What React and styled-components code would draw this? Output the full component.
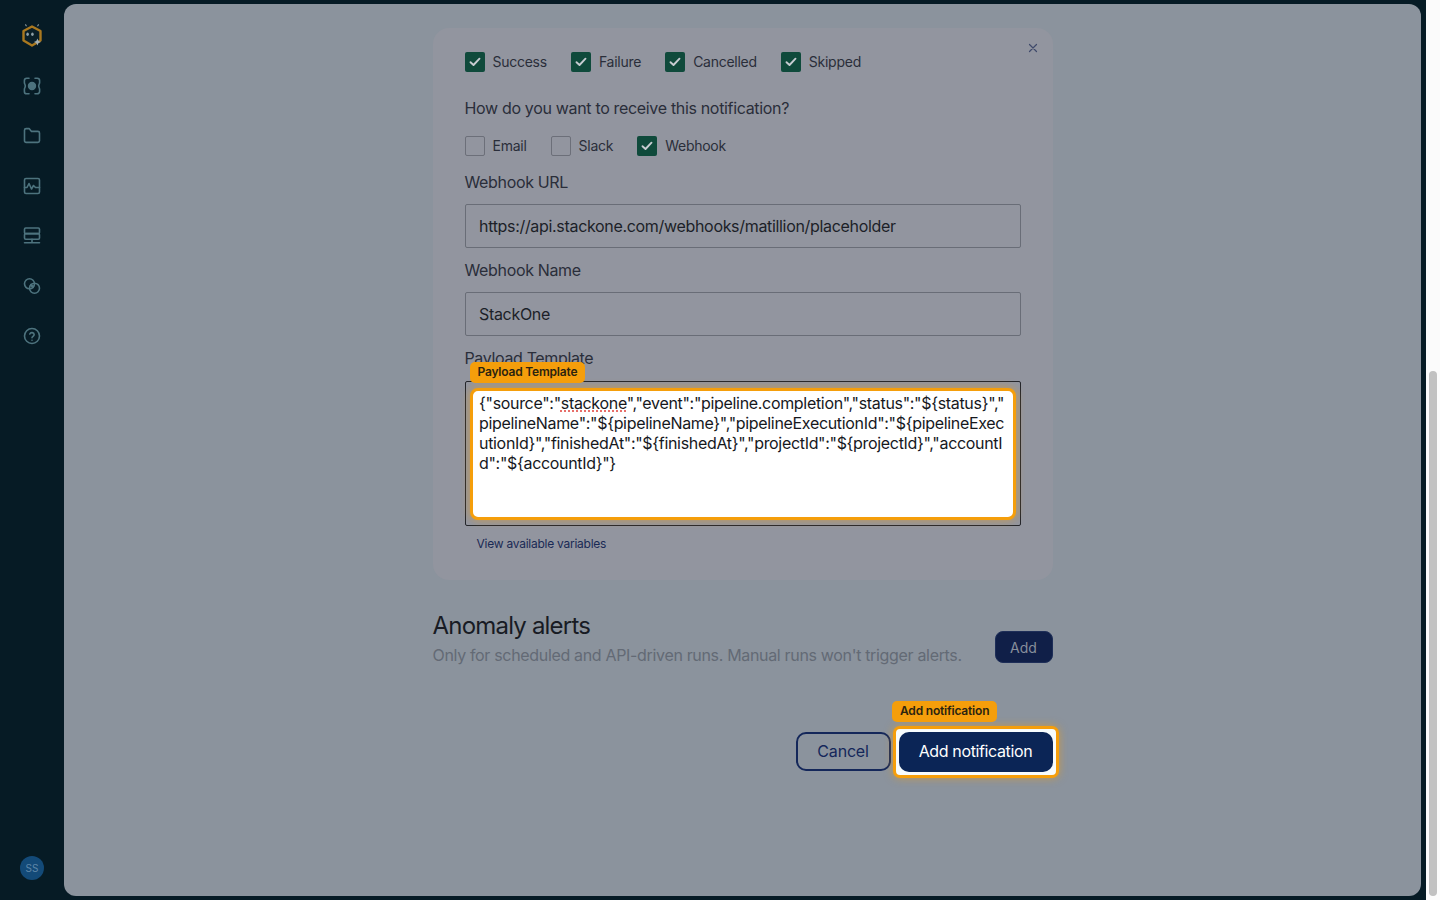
import React from 'react';
import styled, { createGlobalStyle } from 'styled-components';

const GlobalStyle = createGlobalStyle`
  html, body {
    margin: 0;
    height: 100%;
    overflow: hidden;
    background: #061b25;
    font-family: Inter, "Liberation Sans", sans-serif;
  }
`;

const Page = styled.div`
  display: flex;
  height: 900px;
  background: #061b25;
`;

const Sidebar = styled.nav`
  display: flex;
  flex-direction: column;
  align-items: center;
  width: 64px;
  flex: none;
  padding: 11px 0 20px;
  box-sizing: border-box;
`;

const NavIcon = styled.div`
  display: flex;
  align-items: center;
  justify-content: center;
  width: 64px;
  height: 50px;
  color: #4d737e;
`;

const Avatar = styled.div`
  display: flex;
  align-items: center;
  justify-content: center;
  width: 24px;
  height: 24px;
  margin-top: auto;
  border-radius: 50%;
  background: #134a78;
  color: #5f87a8;
  font-size: 10px;
`;

const Main = styled.main`
  flex: 1;
  margin: 4px 5px 4px 0;
  padding-top: 24px;
  border-radius: 12px;
  background: #8b939d;
  overflow: hidden;
`;

const Column = styled.div`
  width: 620px;
  margin: 0 auto;
`;

const Card = styled.section`
  position: relative;
  height: 552px;
  box-sizing: border-box;
  padding: 24px 32px 0;
  border-radius: 16px;
  background: #92959f;
`;

const CloseButton = styled.div`
  position: absolute;
  top: 15px;
  right: 15px;
  display: flex;
  color: #3f4a6b;
`;

const CheckRow = styled.div`
  display: flex;
  gap: 24px;
  margin-top: ${props => props.$top || 0}px;
`;

const CheckItem = styled.label`
  display: flex;
  align-items: center;
  gap: 8px;
  height: 20px;
  font-size: 14px;
  letter-spacing: -0.26px;
  color: #2a2e3a;
`;

const CheckText = styled.span`
  margin-bottom: 2px;
`;

const Box = styled.span`
  display: flex;
  align-items: center;
  justify-content: center;
  width: 20px;
  height: 20px;
  box-sizing: border-box;
  border-radius: 2px;
  background: ${props => (props.$on ? '#0f4a3b' : 'transparent')};
  border: ${props => (props.$on ? 'none' : '1px solid #6c6f79')};
  color: #c6cbd0;
`;

const Question = styled.div`
  margin-top: 24px;
  font-size: 16px;
  line-height: 24px;
  letter-spacing: -0.33px;
  color: #2a2e3a;
`;

const FieldLabel = styled.div`
  margin-top: ${props => props.$top}px;
  margin-bottom: ${props => props.$bottom}px;
  font-size: 16px;
  line-height: 24px;
  letter-spacing: -0.35px;
  color: #2a2e3a;
`;

const Input = styled.div`
  display: flex;
  align-items: center;
  height: 44px;
  box-sizing: border-box;
  padding: 0 13.5px;
  border: 1px solid #696d77;
  border-radius: 2px;
  font-size: 16px;
  letter-spacing: -0.32px;
  color: #1c1f28;
`;

const TextareaFrame = styled.div`
  position: relative;
  height: 145px;
  box-sizing: border-box;
  padding: 6px 4px 5px;
  border: 1px solid #24262c;
  border-radius: 2px;
`;

const Highlight = styled.div`
  height: 100%;
  box-sizing: border-box;
  padding: 2px 5px 2px 6.5px;
  border: 3px solid #f59e0b;
  border-radius: 8px;
  background: #fff;
  box-shadow: 0 0 8px rgba(245, 158, 11, 0.55);
  font-size: 16px;
  line-height: 20px;
  letter-spacing: -0.32px;
  color: #16181d;
  overflow-wrap: anywhere;
`;

const Misspelled = styled.span`
  text-decoration: underline dotted #e0403a;
  text-underline-offset: 2px;
`;

const Tag = styled.span`
  position: absolute;
  left: ${props => props.$left}px;
  top: ${props => props.$top}px;
  padding: 0 8px;
  height: 21px;
  line-height: 20px;
  border-radius: 5px;
  background: #f59e0b;
  font-size: 12px;
  font-weight: 600;
  letter-spacing: -0.2px;
  color: #2b2410;
  white-space: nowrap;
`;

const VariablesLink = styled.a`
  display: block;
  margin: 10px 0 0 12px;
  font-size: 12px;
  line-height: 16px;
  letter-spacing: -0.25px;
  color: #1a2a55;
`;

const AlertRow = styled.div`
  display: flex;
  justify-content: space-between;
  align-items: flex-end;
  margin-top: 30px;
`;

const AlertTitle = styled.h2`
  margin: 0;
  font-size: 24px;
  font-weight: 400;
  line-height: 32px;
  letter-spacing: -0.8px;
  color: #181b24;
`;

const AlertText = styled.p`
  margin: 1px 0 0;
  font-size: 16px;
  line-height: 24px;
  letter-spacing: -0.33px;
  color: #636a75;
`;

const AddButton = styled.button`
  width: 58px;
  height: 32px;
  margin-bottom: 4px;
  border: 1px solid #1e2e58;
  border-radius: 8px;
  background: #101f48;
  font: 400 14px Inter, sans-serif;
  color: #878e9b;
`;

const Actions = styled.div`
  position: relative;
  display: flex;
  justify-content: flex-end;
  align-items: flex-start;
  gap: 2px;
  margin: 65px -6px 0 0;
`;

const CancelButton = styled.button`
  width: 95px;
  height: 39px;
  padding: 0 0 1px;
  border: 2px solid #14275a;
  border-radius: 10px;
  background: transparent;
  font: 400 16px Inter, sans-serif;
  letter-spacing: -0.2px;
  color: #14275a;
`;

const SubmitRing = styled.div`
  margin-top: -6px;
  padding: 3px;
  border: 3px solid #f59e0b;
  border-radius: 7px;
  background: #f7fcfd;
  box-shadow: 0 0 8px rgba(245, 158, 11, 0.55);
`;

const SubmitButton = styled.button`
  display: block;
  width: 154px;
  height: 40px;
  padding: 0 0 2px;
  border: none;
  border-radius: 10px;
  background: #0b2556;
  font: 400 16px Inter, sans-serif;
  letter-spacing: -0.37px;
  color: #fff;
`;

const Scrollbar = styled.div`
  flex: none;
  width: 14px;
  padding: 371px 3px 4px;
  box-sizing: border-box;
  background: #fbfbfb;
`;

const ScrollThumb = styled.div`
  height: 100%;
  border-radius: 4px;
  background: #c1c1c1;
`;

const stroke = {
  fill: 'none',
  stroke: 'currentColor',
  strokeWidth: 1.6,
  strokeLinecap: 'round',
  strokeLinejoin: 'round',
};

const Logo = () => (
  <svg width="24" height="26" viewBox="0 0 24 26">
    <path d="M12 3.5 20.5 8v9.5L12 22.5 3.5 17.5V8z" fill="#0a1f28" stroke="#a9781f" strokeWidth="2.4" strokeLinejoin="round" />
    <ellipse cx="7.6" cy="11.3" rx="1.3" ry="1.7" fill="#8fa1a8" />
    <ellipse cx="12.4" cy="11.3" rx="1.3" ry="1.7" fill="#8fa1a8" />
    <path d="M5.6 1.8 6.2 2.8M18.4 1.8 17.8 2.8" stroke="#8a9aa0" strokeWidth="1.2" strokeLinecap="round" />
    <path d="M17.4 15.5l1.1 2.4 2.4 1.1-2.4 1.1-1.1 2.4-1.1-2.4-2.4-1.1 2.4-1.1z" fill="#a3b0b5" />
  </svg>
);

const ScanIcon = () => (
  <svg width="18" height="18" viewBox="0 0 18 18" {...stroke}>
    <path d="M6 1.2H3.8A2.4 2.4 0 0 0 1.4 3.6v2.2c0 1 .9 1.6.9 3.2s-.9 2.2-.9 3.2v2.2a2.4 2.4 0 0 0 2.4 2.4H6M12 1.2h2.2a2.4 2.4 0 0 1 2.4 2.4v2.2c0 1-.9 1.6-.9 3.2s.9 2.2.9 3.2v2.2a2.4 2.4 0 0 1-2.4 2.4H12" />
    <circle cx="9" cy="9" r="3.4" fill="currentColor" />
  </svg>
);

const FolderIcon = () => (
  <svg width="18" height="18" viewBox="0 0 18 18" {...stroke}>
    <path d="M1.5 3.2c0-.9.7-1.6 1.6-1.6h3l2.4 2.8h6.4c.9 0 1.6.7 1.6 1.6v7.8c0 .9-.7 1.6-1.6 1.6H3.1c-.9 0-1.6-.7-1.6-1.6z" />
  </svg>
);

const ChartIcon = () => (
  <svg width="18" height="18" viewBox="0 0 18 18" {...stroke}>
    <rect x="1.5" y="1.5" width="15" height="15" rx="1.5" />
    <path d="M1.5 10.5H4l2-4 2.5 5.5 2-3.5 2 2h4" />
  </svg>
);

const ServerIcon = () => (
  <svg width="18" height="18" viewBox="0 0 18 18" {...stroke}>
    <rect x="1.5" y="1" width="15" height="5.6" rx="1.2" />
    <rect x="1.5" y="6.6" width="15" height="5.6" rx="1.2" />
    <path d="M9 12.2v3.6M1.5 15.8h15" />
  </svg>
);

const LinkedIcon = () => (
  <svg width="18" height="18" viewBox="0 0 18 18" {...stroke}>
    <circle cx="6.5" cy="6.8" r="5" />
    <circle cx="11.5" cy="11.2" r="5" />
    <path d="M8 6.5l3.5 3-1.5 2-3.5-3z" fill="currentColor" stroke="none" />
  </svg>
);

const HelpIcon = () => (
  <svg width="18" height="18" viewBox="0 0 18 18" {...stroke}>
    <circle cx="9" cy="9" r="7.5" />
    <path d="M6.8 7a2.3 2.3 0 0 1 4.4.6c0 1.5-2.2 1.9-2.2 3.2" />
    <path d="M9 13.2v.1" />
  </svg>
);

const CheckMark = () => (
  <svg width="12" height="10" viewBox="0 0 12 10" fill="none" stroke="currentColor" strokeWidth="1.9" strokeLinecap="round" strokeLinejoin="round">
    <path d="M1.5 5.2 4.5 8l6-6.3" />
  </svg>
);

const CloseIcon = () => (
  <svg width="10" height="10" viewBox="0 0 10 10" fill="none" stroke="currentColor" strokeWidth="1.2" strokeLinecap="round">
    <path d="M1.5 1.5l7 7M8.5 1.5l-7 7" />
  </svg>
);

const navIcons = [Logo, ScanIcon, FolderIcon, ChartIcon, ServerIcon, LinkedIcon, HelpIcon];

const outcomes = ['Success', 'Failure', 'Cancelled', 'Skipped'];
const channels = [
  { name: 'Email', on: false },
  { name: 'Slack', on: false },
  { name: 'Webhook', on: true },
];

const Check = ({ label, on }) => (
  <CheckItem>
    <Box $on={on}>{on && <CheckMark />}</Box>
    <CheckText>{label}</CheckText>
  </CheckItem>
);

const App = () => (
  <Page>
    <GlobalStyle />
    <Sidebar>
      {navIcons.map((Icon, i) => (
        <NavIcon key={i}><Icon /></NavIcon>
      ))}
      <Avatar>SS</Avatar>
    </Sidebar>

    <Main>
      <Column>
        <Card>
          <CloseButton><CloseIcon /></CloseButton>
          <CheckRow>
            {outcomes.map(name => <Check key={name} label={name} on />)}
          </CheckRow>

          <Question>How do you want to receive this notification?</Question>

          <CheckRow $top={16}>
            {channels.map(c => <Check key={c.name} label={c.name} on={c.on} />)}
          </CheckRow>

          <FieldLabel $top={14} $bottom={10}>Webhook URL</FieldLabel>
          <Input>https://api.stackone.com/webhooks/matillion/placeholder</Input>

          <FieldLabel $top={10} $bottom={10}>Webhook Name</FieldLabel>
          <Input>StackOne</Input>

          <FieldLabel $top={10} $bottom={11}>Payload Template</FieldLabel>
          <TextareaFrame>
            <Tag $left={4} $top={-20}>Payload Template</Tag>
            <Highlight>
              {'{"source":"'}<Misspelled>stackone</Misspelled>
              {'","event":"pipeline.completion","status":"${status}","pipelineName":"${pipelineName}","pipelineExecutionId":"${pipelineExecutionId}","finishedAt":"${finishedAt}","projectId":"${projectId}","accountId":"${accountId}"}'}
            </Highlight>
          </TextareaFrame>
          <VariablesLink>View available variables</VariablesLink>
        </Card>

        <AlertRow>
          <div>
            <AlertTitle>Anomaly alerts</AlertTitle>
            <AlertText>Only for scheduled and API-driven runs. Manual runs won't trigger alerts.</AlertText>
          </div>
          <AddButton>Add</AddButton>
        </AlertRow>

        <Actions>
          <Tag $left={459.5} $top={-31.5}>Add notification</Tag>
          <CancelButton>Cancel</CancelButton>
          <SubmitRing>
            <SubmitButton>Add notification</SubmitButton>
          </SubmitRing>
        </Actions>
      </Column>
    </Main>

    <Scrollbar>
      <ScrollThumb />
    </Scrollbar>
  </Page>
);

export default App;
